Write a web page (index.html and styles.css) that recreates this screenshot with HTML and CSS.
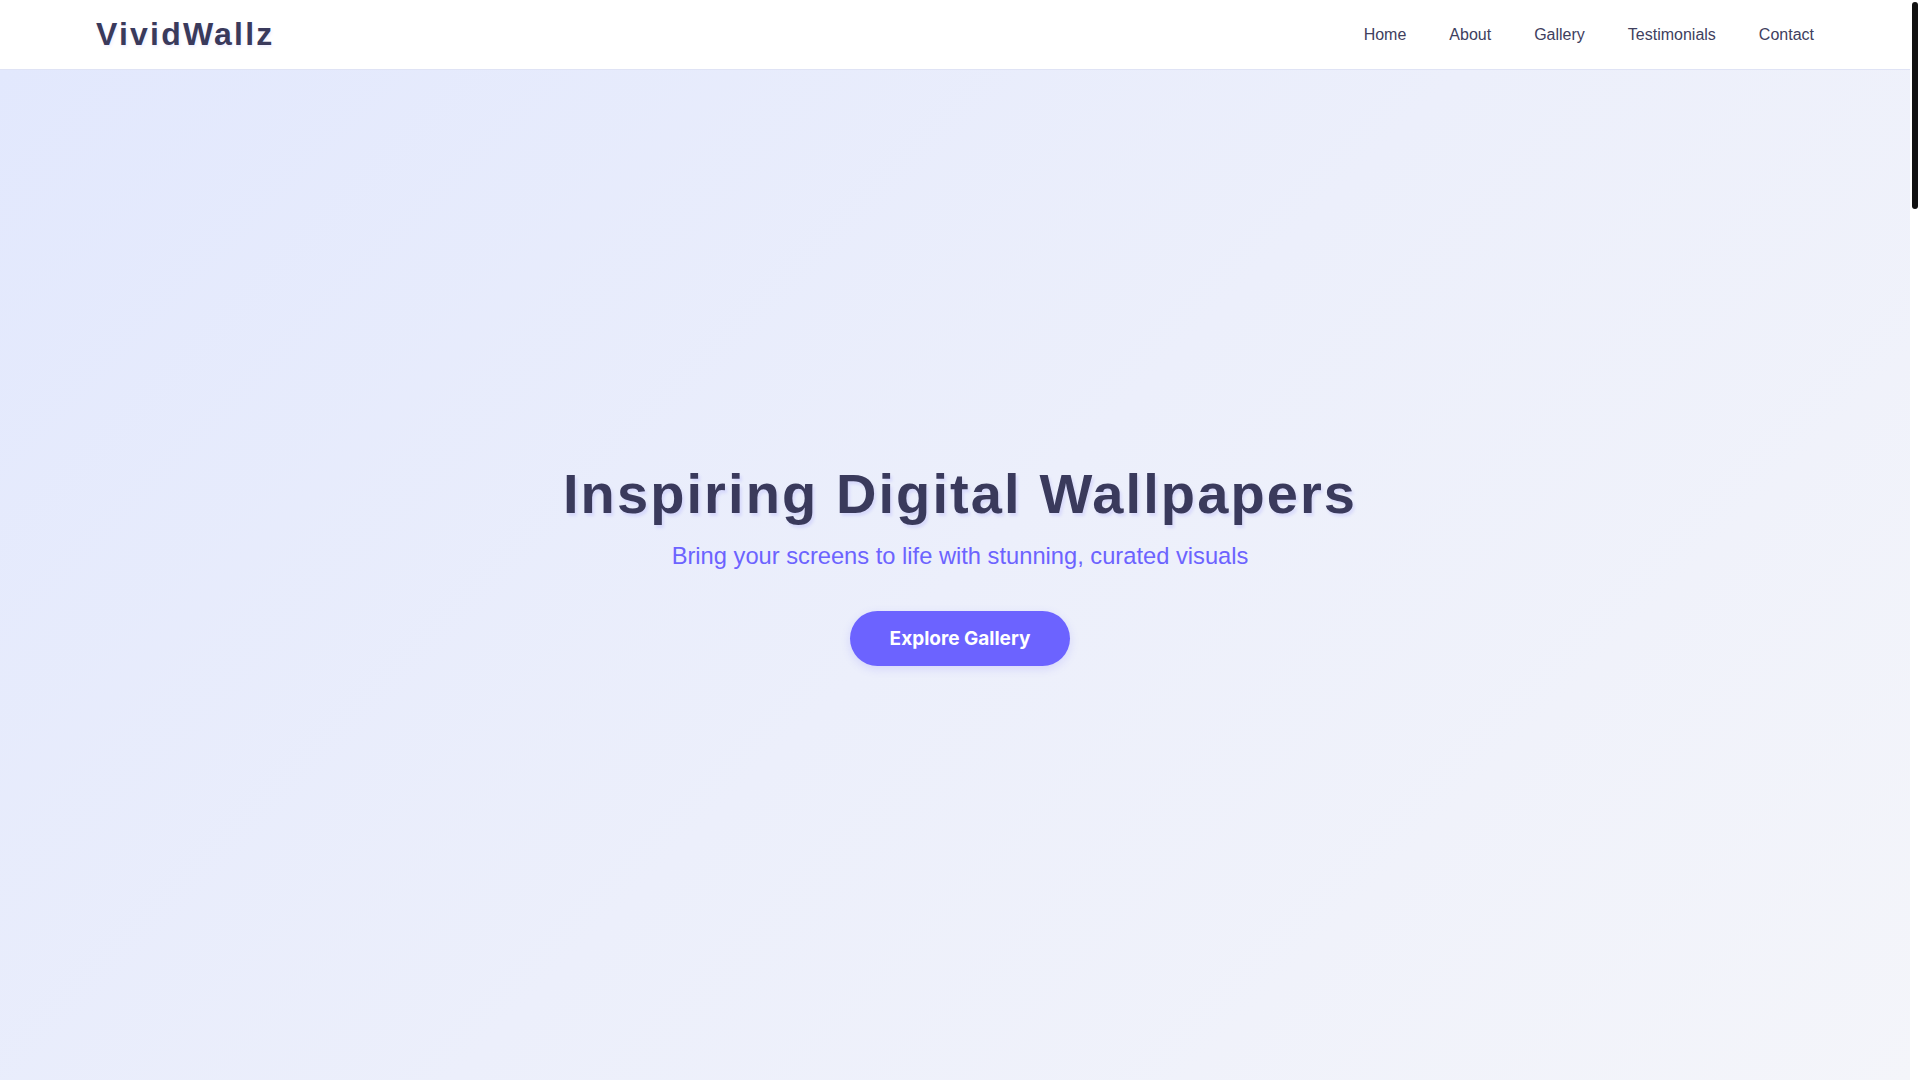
FILE: index.html
```html
<!DOCTYPE html>
<html lang="en">
<head>
<meta charset="utf-8">
<title>VividWallz</title>
<link rel="stylesheet" href="styles.css">
</head>
<body>
<header class="site-header">
  <div class="logo">VividWallz</div>
  <nav class="nav">
    <a href="#home">Home</a>
    <a href="#about">About</a>
    <a href="#gallery">Gallery</a>
    <a href="#testimonials">Testimonials</a>
    <a href="#contact">Contact</a>
  </nav>
</header>
<main>
  <section class="hero" id="home">
    <div class="hero-content">
      <h1 class="hero-title">Inspiring Digital Wallpapers</h1>
      <p class="hero-sub">Bring your screens to life with stunning, curated visuals</p>
      <a class="btn" href="#gallery">Explore Gallery</a>
    </div>
  </section>
</main>
<div class="scrollbar" aria-hidden="true"><div class="scrollbar-thumb"></div></div>
</body>
</html>
```
FILE: styles.css
```css
html, body {
  margin: 0;
  padding: 0;
}
body {
  font-family: "Liberation Sans", Arial, sans-serif;
  color: #3a3a5c;
  background: #f4f5fa;
  overflow: hidden;
}
.site-header {
  height: 70px;
  box-sizing: border-box;
  display: flex;
  align-items: center;
  justify-content: space-between;
  padding: 0 calc(5% + 10px) 0 96px;
  background: #ffffff;
  border-bottom: 1px solid #dfe3f5;
  box-shadow: 0 1px 3px rgba(80, 80, 160, 0.06);
}
.logo {
  font-size: 32px;
  font-weight: 700;
  letter-spacing: 2.2px;
  color: #3a3a5c;
  text-shadow: 1px 2px 3px rgba(108, 99, 255, 0.1);
}
.nav {
  display: flex;
  gap: 43px;
  padding-top: 1px;
}
.nav a {
  font-size: 16px;
  color: #40405e;
  text-decoration: none;
}
.hero {
  height: 1010px;
  box-sizing: border-box;
  padding-bottom: 23px;
  display: flex;
  align-items: center;
  justify-content: center;
  background: linear-gradient(135deg, #e2e8fd 0%, #eceffb 50%, #f4f5fa 100%);
}
.hero-content {
  display: flex;
  flex-direction: column;
  align-items: center;
  text-align: center;
}
.hero-title {
  margin: 0;
  font-size: 56px;
  font-weight: 700;
  letter-spacing: 2.1px;
  line-height: normal;
  color: #3a3a5c;
  text-shadow: 2px 3px 3px rgba(108, 99, 255, 0.15);
}
.hero-sub {
  margin: 17px 0 0;
  font-size: 23.7px;
  line-height: normal;
  color: #6c63ff;
}
.btn {
  margin-top: 41px;
  display: inline-block;
  padding: 16px 40px;
  border-radius: 999px;
  background: #6c63ff;
  color: #ffffff;
  font-family: Inter, "Liberation Sans", sans-serif;
  font-size: 19px;
  font-weight: 700;
  line-height: normal;
  text-decoration: none;
  box-shadow: 0 3px 10px rgba(108, 99, 255, 0.18);
}
.scrollbar {
  position: fixed;
  top: 0;
  right: 0;
  width: 10px;
  height: 100vh;
  box-sizing: border-box;
  padding: 2px;
  background: #ffffff;
}
.scrollbar-thumb {
  height: 207px;
  background: #111111;
  border-radius: 3px;
}
```
